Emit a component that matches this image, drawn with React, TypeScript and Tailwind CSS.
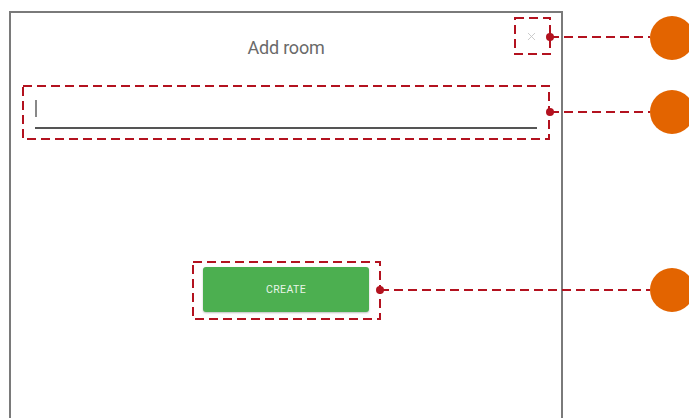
import { X } from 'lucide-react'

export default function App() {
  return (
    <div className="relative w-[689px] h-[418px] overflow-hidden bg-white" style={{ fontFamily: 'Roboto, "Liberation Sans", sans-serif' }}>
      {/* Dialog */}
      <div className="ml-[9px] mt-[11px] w-[554px] h-[420px] border-2 border-b-0 border-[#7a7a7a] bg-white">
        <div className="relative flex justify-center pt-[24px] h-[60px]">
          <span className="text-[18px] leading-[22px] text-[#6a6a6a] tracking-[-0.2px]">Add room</span>
          <X className="absolute right-[23px] top-[17px] text-[#c4c4c4]" size={13} strokeWidth={1.6} />
        </div>
        <div className="mx-[24px] mt-[23px] h-[33px] border-b-2 border-[#555] flex items-start pt-[4px]">
          <span className="block w-[2px] h-[17px] bg-[#888]" />
        </div>
        <div className="flex justify-center mt-[138px]">
          <button className="w-[166px] h-[45px] rounded-[3px] bg-[#4caf50] text-[#e8f5e9] text-[10.5px] font-normal tracking-[0.4px] shadow-[0_1px_2px_rgba(0,0,0,0.25)]">
            CREATE
          </button>
        </div>
      </div>

      {/* Annotations */}
      <svg className="absolute inset-0" width="689" height="418" viewBox="0 0 689 418">
        <g fill="none" stroke="#b3121f" strokeWidth="2" strokeDasharray="9 5">
          <rect x="515" y="18" width="35" height="36" />
          <rect x="23" y="86" width="526" height="53" />
          <rect x="193" y="262" width="187" height="57" />
          <line x1="550" y1="37" x2="650" y2="37" />
          <line x1="550" y1="112" x2="650" y2="112" />
          <line x1="380" y1="290" x2="650" y2="290" />
        </g>
        <g fill="#b3121f">
          <circle cx="550" cy="37" r="4" />
          <circle cx="550" cy="112" r="4" />
          <circle cx="380" cy="290" r="4" />
        </g>
        <g fill="#e36400">
          <circle cx="672" cy="38" r="22" />
          <circle cx="672" cy="112" r="22" />
          <circle cx="672" cy="290" r="22" />
        </g>
      </svg>
    </div>
  )
}
